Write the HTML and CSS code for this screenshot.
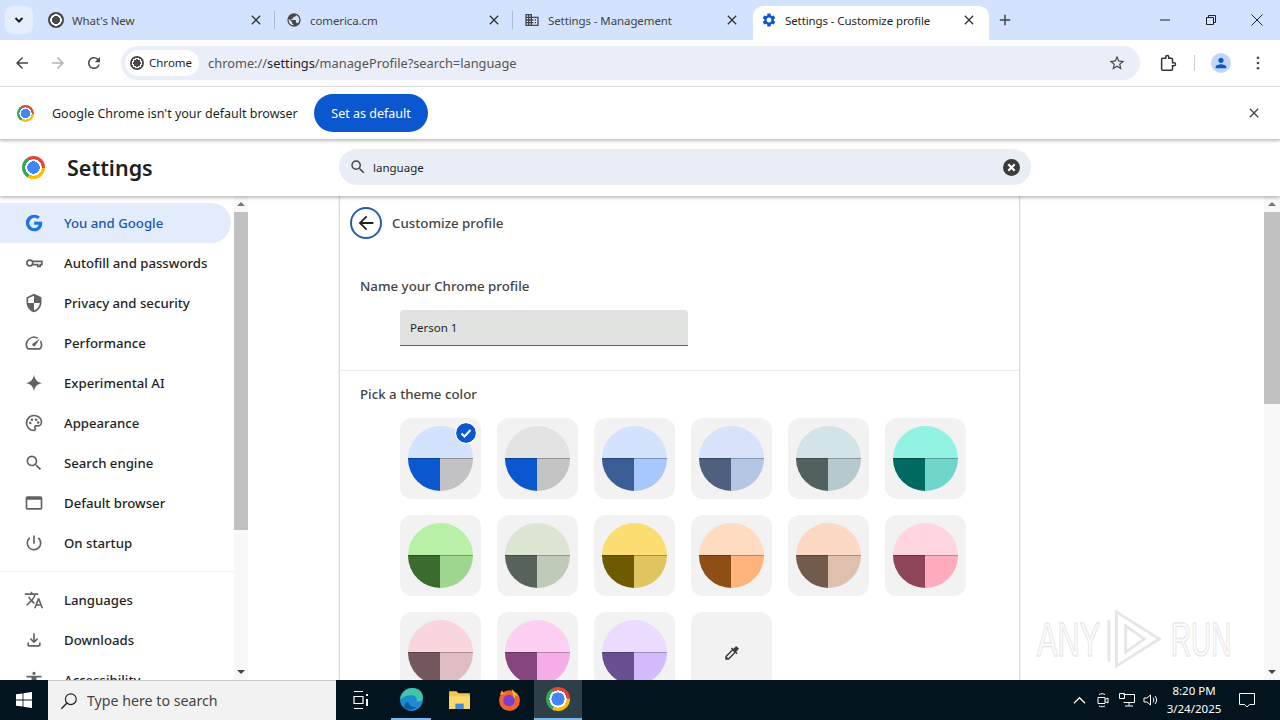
FILE: index.html
```html
<!DOCTYPE html>
<html lang="en">
<head>
  <title>Settings - Customize profile</title>
  <meta charset="utf-8" />
  <link rel="stylesheet" href="styles.css">
</head>
<body>

  <div class="tabstrip">
    <div class="tab-search"><svg class="ic12" viewBox="0 0 12 12"><path d="M2.500 4 6 7.500 9.500 4" fill="none" stroke="#1f1f1f" stroke-width="2"/></svg></div>
    <div class="tab">
      <span class="chrome-logo mono ic16"></span>
      <span class="tab-title">What's New</span>
      <svg class="ic16 tab-close" viewBox="0 0 24 24"><use href="#i-close"/></svg>
    </div>
    <div class="tab with-sep">
      <svg class="ic16 fav" viewBox="0 0 24 24"><path d="M12 2a10 10 0 1 0 0 20 10 10 0 0 0 0-20zm-1 17.930A8 8 0 0 1 4 12c0-.62.08-1.210.21-1.790L9 15v1a2 2 0 0 0 2 2v1.930zm6.900-2.540A2 2 0 0 0 16 16h-1v-3a1 1 0 0 0-1-1H8v-2h2a1 1 0 0 0 1-1V7h2a2 2 0 0 0 2-2v-.41a7.980 7.980 0 0 1 2.900 12.800z"/></svg>
      <span class="tab-title">comerica.cm</span>
      <svg class="ic16 tab-close" viewBox="0 0 24 24"><use href="#i-close"/></svg>
    </div>
    <div class="tab with-sep">
      <svg class="ic16 fav" viewBox="0 0 24 24"><path d="M12 7V3H2v18h20V7H12zM6 19H4v-2h2v2zm0-4H4v-2h2v2zm0-4H4V9h2v2zm0-4H4V5h2v2zm4 12H8v-2h2v2zm0-4H8v-2h2v2zm0-4H8V9h2v2zm0-4H8V5h2v2zm10 12h-8v-2h2v-2h-2v-2h2v-2h-2V9h8v10zm-2-8h-2v2h2v-2zm0 4h-2v2h2v-2z"/></svg>
      <span class="tab-title">Settings - Management</span>
      <svg class="ic16 tab-close" viewBox="0 0 24 24"><use href="#i-close"/></svg>
    </div>
    <div class="tab active">
      <svg class="ic16 gear" viewBox="0 0 24 24"><path d="M19.140 12.940c.04-.3.060-.61.060-.94 0-.32-.02-.64-.07-.94l2.030-1.580a.49.49 0 0 0 .12-.61l-1.920-3.320a.488.488 0 0 0-.59-.22l-2.390.96c-.5-.38-1.030-.7-1.620-.94l-.36-2.540a.484.484 0 0 0-.48-.41h-3.840c-.24 0-.43.17-.47.41l-.36 2.540c-.59.24-1.130.57-1.620.94l-2.390-.96c-.22-.08-.47 0-.59.22L2.740 8.870c-.12.21-.08.47.12.61l2.030 1.580c-.05.3-.09.63-.09.94s.02.64.07.94l-2.030 1.580a.49.49 0 0 0-.12.61l1.920 3.320c.12.22.37.29.59.22l2.390-.96c.5.38 1.030.7 1.620.94l.36 2.540c.05.24.24.41.48.41h3.840c.24 0 .44-.17.47-.41l.36-2.540c.59-.24 1.130-.56 1.620-.94l2.390.96c.22.08.47 0 .59-.22l1.920-3.320c.12-.22.07-.47-.12-.61l-2.010-1.580zM12 15.600c-1.980 0-3.600-1.620-3.600-3.600s1.620-3.600 3.600-3.600 3.600 1.620 3.600 3.600-1.620 3.600-3.600 3.600z"/></svg>
      <span class="tab-title">Settings - Customize profile</span>
      <svg class="ic16 tab-close" viewBox="0 0 24 24"><use href="#i-close"/></svg>
    </div>
    <svg class="ic12 new-tab" viewBox="0 0 16 16"><path d="M8 1v14M1 8h14" stroke="#444" stroke-width="2"/></svg>
    <div class="win-controls">
      <svg viewBox="0 0 12 12"><path d="M1 6h10" stroke="#222"/></svg>
      <svg viewBox="0 0 12 12"><path d="M1.500 3.500h7v7h-7zM3.500 3.500v-2h7v7h-2" fill="none" stroke="#222"/></svg>
      <svg viewBox="0 0 12 12"><path d="M.5.500l11 11M11.500.500l-11 11" stroke="#222"/></svg>
    </div>
  </div>

  <div class="toolbar">
    <svg class="ic18 nav" viewBox="0 0 24 24"><path d="M20 11H7.830l5.590-5.590L12 4l-8 8 8 8 1.410-1.410L7.830 13H20v-2z"/></svg>
    <svg class="ic18 nav off" viewBox="0 0 24 24"><path d="M12 4l-1.410 1.410L16.170 11H4v2h12.170l-5.580 5.590L12 20l8-8z"/></svg>
    <svg class="ic18 nav" viewBox="0 0 24 24"><path d="M17.650 6.350A7.958 7.958 0 0 0 12 4c-4.420 0-7.990 3.580-7.990 8s3.570 8 7.990 8c3.730 0 6.840-2.550 7.730-6h-2.080A5.990 5.990 0 0 1 12 18c-3.310 0-6-2.690-6-6s2.690-6 6-6c1.660 0 3.140.69 4.220 1.780L13 11h7V4l-2.350 2.350z"/></svg>
    <div class="omnibox">
      <div class="chip"><span class="chrome-logo mono ic14"></span>Chrome</div>
      <span class="url">chrome://<b>settings</b>/manageProfile?search=language</span>
      <svg class="ic18 star" viewBox="0 0 24 24"><path d="M22 9.240l-7.190-.62L12 2 9.190 8.630 2 9.240l5.460 4.730L5.820 21 12 17.270 18.180 21l-1.630-7.030L22 9.240zM12 15.400l-3.760 2.270 1-4.280-3.320-2.880 4.380-.38L12 6.100l1.710 4.040 4.380.38-3.320 2.880 1 4.280L12 15.400z"/></svg>
    </div>
    <svg class="ic18 ext" viewBox="0 0 24 24"><path d="M20 11.500h-2V7a1.500 1.500 0 0 0-1.500-1.500H13V4a2 2 0 0 0-4 0v1.500H5A1.500 1.500 0 0 0 3.500 7v13A1.500 1.500 0 0 0 5 21.500h11.500A1.500 1.500 0 0 0 18 20v-4.500h2a2 2 0 0 0 0-4z" fill="none" stroke="#333" stroke-width="2"/></svg>
    <span class="tool-sep"></span>
    <span class="avatar"><svg class="ic16" viewBox="0 0 24 24"><path d="M12 12c2.210 0 4-1.790 4-4s-1.790-4-4-4-4 1.790-4 4 1.790 4 4 4zm0 2c-2.670 0-8 1.340-8 4v2h16v-2c0-2.660-5.330-4-8-4z"/></svg></span>
    <svg class="ic18 menu" viewBox="0 0 24 24"><circle cx="12" cy="5" r="1.800"/><circle cx="12" cy="12" r="1.800"/><circle cx="12" cy="19" r="1.800"/></svg>
  </div>

  <div class="infobar">
    <span class="chrome-logo ic17"></span>
    <span class="info-text">Google Chrome isn't your default browser</span>
    <span class="default-btn">Set as default</span>
    <svg class="ic16 info-close" viewBox="0 0 24 24"><use href="#i-close"/></svg>
  </div>

  <div class="settings-head">
    <div class="brand">
      <span class="chrome-logo ic23"></span>
      <h1>Settings</h1>
    </div>
    <div class="search-box">
      <svg class="ic18" viewBox="0 0 24 24"><use href="#i-search"/></svg>
      <span class="search-text">language</span>
      <span class="search-clear"><svg viewBox="0 0 16 16"><path d="M5 5l6 6M11 5l-6 6" stroke="#fff" stroke-width="2"/></svg></span>
    </div>
  </div>

  <div class="content">
    <nav class="sidebar">
      <a class="nav-item active"><svg viewBox="0 0 24 24"><path d="M12.240 10.290v3.860h5.400c-.22 1.400-1.630 4.100-5.400 4.100a6.260 6.260 0 0 1 0-12.500c2 0 3.340.85 4.100 1.580l2.800-2.700A9.900 9.900 0 0 0 12.240 2a10 10 0 1 0 0 20c5.780 0 9.600-4.060 9.600-9.780 0-.66-.07-1.160-.16-1.660z"/></svg>You and Google</a>
      <a class="nav-item"><svg viewBox="0 0 24 24"><circle cx="7" cy="12" r="3.500" fill="none" stroke="#5f6368" stroke-width="2"/><path d="M10.500 10h11v4h-2v2h-3v-2h-6" fill="none" stroke="#5f6368" stroke-width="2"/></svg>Autofill and passwords</a>
      <a class="nav-item"><svg viewBox="0 0 24 24"><path d="M12 1 3 5v6c0 5.550 3.840 10.740 9 12 5.160-1.260 9-6.450 9-12V5l-9-4zm0 10.990h7c-.53 4.120-3.280 7.790-7 8.940V12H5V6.300l7-3.110v8.800z"/></svg>Privacy and security</a>
      <a class="nav-item"><svg viewBox="0 0 24 24"><path d="M20.380 8.570l-1.230 1.850a8 8 0 0 1-.22 7.580H5.070A8 8 0 0 1 15.580 6.850l1.850-1.230A10 10 0 0 0 3.350 19a2 2 0 0 0 1.720 1h13.850a2 2 0 0 0 1.740-1 10 10 0 0 0-.27-10.440zm-9.790 6.840a2 2 0 0 0 2.830 0l5.660-8.490-8.490 5.660a2 2 0 0 0 0 2.830z"/></svg>Performance</a>
      <a class="nav-item"><svg viewBox="0 0 24 24"><path d="M12 2C13 8 16 11 22 12 16 13 13 16 12 22 11 16 8 13 2 12 8 11 11 8 12 2z"/></svg>Experimental AI</a>
      <a class="nav-item"><svg viewBox="0 0 24 24"><path d="M12 3C7 3 3 7 3 12s4 9 9 9a1.800 1.800 0 0 0 1.300-3c-.9-1.100-.2-2.500 1.200-2.500H16c2.800 0 5-2 5-4.800C21 6.500 17 3 12 3z" fill="none" stroke="#5f6368" stroke-width="2"/><circle cx="7.500" cy="12" r="1.500"/><circle cx="9.500" cy="8" r="1.500"/><circle cx="14.500" cy="8" r="1.500"/><circle cx="17" cy="11.500" r="1.500"/></svg>Appearance</a>
      <a class="nav-item"><svg viewBox="0 0 24 24"><use href="#i-search"/></svg>Search engine</a>
      <a class="nav-item"><svg viewBox="0 0 24 24"><path d="M20 4H4a2 2 0 0 0-2 2v12a2 2 0 0 0 2 2h16a2 2 0 0 0 2-2V6a2 2 0 0 0-2-2zm0 14H4V8h16v10z"/></svg>Default browser</a>
      <a class="nav-item"><svg viewBox="0 0 24 24"><path d="M13 3h-2v10h2V3zm4.830 2.170l-1.420 1.420A6.920 6.920 0 0 1 19 12c0 3.870-3.130 7-7 7A6.995 6.995 0 0 1 7.580 6.580L6.170 5.170A8.932 8.932 0 0 0 3 12a9 9 0 0 0 18 0c0-2.740-1.230-5.180-3.170-6.830z"/></svg>On startup</a>
      <div class="nav-divider"></div>
      <a class="nav-item"><svg viewBox="0 0 24 24"><path d="M12.870 15.070l-2.540-2.510.03-.03A17.520 17.520 0 0 0 14.070 6H17V4h-7V2H8v2H1v2h11.170C11.500 7.920 10.440 9.750 9 11.350 8.070 10.320 7.300 9.190 6.690 8h-2c.73 1.630 1.730 3.170 2.980 4.560l-5.090 5.020L4 19l5-5 3.110 3.110.76-2.040zM18.500 10h-2L12 22h2l1.120-3h4.750L21 22h2l-4.500-12zm-2.620 7l1.620-4.330L19.120 17h-3.240z"/></svg>Languages</a>
      <a class="nav-item"><svg viewBox="0 0 24 24"><path d="M18 15v3H6v-3H4v3a2 2 0 0 0 2 2h12a2 2 0 0 0 2-2v-3h-2zM17 11l-1.410-1.410L13 12.170V4h-2v8.170L8.410 9.590 7 11l5 5 5-5z"/></svg>Downloads</a>
      <a class="nav-item"><svg viewBox="0 0 24 24"><path d="M12 2a2 2 0 1 1 0 4 2 2 0 0 1 0-4zm9 7h-6v13h-2v-6h-2v6H9V9H3V7h18v2z"/></svg>Accessibility</a>
    </nav>
    <div class="scrollbar side"><i class="arrow up"></i><b class="thumb"></b><i class="arrow down"></i></div>

    <main class="main">
      <section class="card">
        <div class="card-head">
          <span class="back-btn"><svg class="ic22" viewBox="0 0 24 24"><path d="M20 11H7.830l5.590-5.590L12 4l-8 8 8 8 1.410-1.410L7.830 13H20v-2z"/></svg></span>
          <h2>Customize profile</h2>
        </div>
        <div class="name-section">
          <h3>Name your Chrome profile</h3>
          <div class="name-input">Person 1</div>
        </div>
        <div class="theme-section">
          <h3>Pick a theme color</h3>
          <div class="swatches">
            <div class="swatch"><span class="disc c-blue"></span><span class="check"><svg viewBox="0 0 16 16"><path d="M3.500 8.500 6.500 11.500 12.500 5" fill="none" stroke="#fff" stroke-width="2"/></svg></span></div>
            <div class="swatch"><span class="disc c-grey"></span></div>
            <div class="swatch"><span class="disc c-navy"></span></div>
            <div class="swatch"><span class="disc c-slate"></span></div>
            <div class="swatch"><span class="disc c-steel"></span></div>
            <div class="swatch"><span class="disc c-teal"></span></div>
            <div class="swatch"><span class="disc c-green"></span></div>
            <div class="swatch"><span class="disc c-sage"></span></div>
            <div class="swatch"><span class="disc c-yellow"></span></div>
            <div class="swatch"><span class="disc c-orange"></span></div>
            <div class="swatch"><span class="disc c-tan"></span></div>
            <div class="swatch"><span class="disc c-rose"></span></div>
            <div class="swatch"><span class="disc c-mauve"></span></div>
            <div class="swatch"><span class="disc c-pink"></span></div>
            <div class="swatch"><span class="disc c-violet"></span></div>
            <div class="swatch picker"><svg class="ic18" viewBox="0 0 24 24"><path d="M20.710 5.630l-2.340-2.340a1 1 0 0 0-1.410 0l-3.120 3.120-1.930-1.910-1.410 1.410 1.420 1.420L3 16.250V21h4.750l8.920-8.920 1.420 1.420 1.410-1.410-1.920-1.920 3.120-3.120a1 1 0 0 0 .01-1.420zM6.920 19 5 17.080l8.060-8.060 1.920 1.920L6.920 19z"/></svg></div>
          </div>
        </div>
      </section>
    </main>
    <div class="scrollbar page"><i class="arrow up"></i><b class="thumb"></b><i class="arrow down"></i></div>

    <div class="watermark">
      <span>ANY</span>
      <svg viewBox="0 0 60 64"><path d="M10 3 56 32 10 61zM2 12v44M20 18 40 32 20 46z" fill="none" stroke="#e6e6e6" stroke-width="3"/></svg>
      <span class="wm-run">RUN</span>
    </div>
  </div>

  <footer class="taskbar">
    <div class="start"><svg viewBox="0 0 16 16"><path fill="#fff" d="M0 2.300 6.600 1.400v6.200H0zM7.400 1.300 16 0v7.600H7.400zM0 8.400h6.600v6.200L0 13.700zM7.400 8.400H16V16l-8.600-1.300z"/></svg></div>
    <div class="task-search">
      <svg viewBox="0 0 20 20"><circle cx="12" cy="8" r="6" fill="none" stroke="#222" stroke-width="1.300"/><path d="M7.500 12.500 1.500 18.500" stroke="#222" stroke-width="1.500"/></svg>
      <span>Type here to search</span>
    </div>
    <div class="task-view"><svg viewBox="0 0 18 18"><path d="M3 .5h9M3 17.500h9M3 5.500h9v7H3z" fill="none" stroke="#fff" stroke-width="1.200"/><path d="M15 3h2v2h-2zM15 8h2v7h-2z" fill="#fff"/></svg></div>
    <div class="task-app edge running">
      <svg viewBox="0 0 24 24"><circle cx="12" cy="12" r="11" fill="#1b8ccf"/><path d="M1 12C2 5 8 1 13 1c6 0 10 4 10 9 0 3-3 4-6 4 1-4-2-6-5-6-5 0-8 2-11 4z" fill="#3fc6a8"/><path d="M9 14c0 4 4 6 8 5-3 3-8 4-12 1 0-3 1-5 4-6z" fill="#0c59a4"/></svg>
    </div>
    <div class="task-app">
      <svg viewBox="0 0 24 24"><path d="M2 4h7l2 2h11v15H2z" fill="#f3c64d"/><path d="M2 9h20v12H2z" fill="#fbd971"/><path d="M8 16h8v5H8z" fill="#3d8ed6"/></svg>
    </div>
    <div class="task-app">
      <svg viewBox="0 0 24 24"><circle cx="12" cy="13" r="10" fill="#f0642f"/><path d="M14 1c1 3 5 5 8 10-1-2-3-3-5-3 1 2 0 3-1 3z" fill="#ffbd2e"/><circle cx="11.500" cy="13" r="5.500" fill="#7b3fd0"/><path d="M3 8c0-2 1-4 2-5 0 2 2 3 4 3z" fill="#ff9a2e"/></svg>
    </div>
    <div class="task-app running current"><span class="chrome-logo ic24"></span></div>

    <div class="tray">
      <svg class="tray-caret" viewBox="0 0 14 14"><path d="M1 10l6-6 6 6" fill="none" stroke="#fff" stroke-width="1.300"/></svg>
      <svg class="tray-ic" viewBox="0 0 16 16"><path d="M3 5.500h7v6H3zM10 7.500l3-1.500v5l-3-1.500M4 2.500c2-1 4-1 6 0M4 14c2 1 4 1 6 0" fill="none" stroke="#fff"/></svg>
      <svg class="tray-ic" viewBox="0 0 16 16"><path d="M4.500 2.500h11v8h-11M.5 1.500h5v5h-5zM10 10.500v3M6 14h8" fill="none" stroke="#fff"/></svg>
      <svg class="tray-ic" viewBox="0 0 16 16"><path d="M1 6h3l3.500-3v10L4 10H1zM10 5.500c1 1.500 1 3.500 0 5M12 4c2 2.500 2 5.500 0 8" fill="none" stroke="#fff"/></svg>
      <div class="clock">8:20 PM<br>3/24/2025</div>
      <svg class="tray-note" viewBox="0 0 18 18"><path d="M1.500 2.500h15v11h-5L9 16l-2.500-2.500h-5z" fill="none" stroke="#fff"/></svg>
    </div>
  </footer>

  <svg class="defs" aria-hidden="true">
    <symbol id="i-close" viewBox="0 0 24 24"><path d="M19 6.410 17.590 5 12 10.590 6.410 5 5 6.410 10.590 12 5 17.590 6.410 19 12 13.410 17.590 19 19 17.590 13.410 12z"/></symbol>
    <symbol id="i-search" viewBox="0 0 24 24"><path d="M15.500 14h-.79l-.28-.27A6.471 6.471 0 0 0 16 9.500 6.500 6.500 0 1 0 9.500 16c1.610 0 3.090-.59 4.230-1.570l.27.28v.79l5 4.990L20.490 19l-4.990-5zm-6 0C7.010 14 5 11.990 5 9.500S7.010 5 9.500 5 14 7.010 14 9.500 11.990 14 9.500 14z"/></symbol>
  </svg>

</body>
</html>
```

FILE: styles.css
```css
* {
  box-sizing: border-box;
}

html, body {
  height: 100%;
}

body {
  margin: 0;
  width: 1280px;
  height: 720px;
  overflow: hidden;
  display: flex;
  flex-direction: column;
  font-family: "Noto Sans", "Liberation Sans", sans-serif;
  color: #1f1f1f;
  background: #fff;
}

h1, h2, h3 {
  margin: 0;
}

svg {
  display: block;
  flex: none;
  fill: #474747;
}

.defs {
  display: none;
}

.ic12 { width: 12px; height: 12px; }
.ic14 { width: 14px; height: 14px; }
.ic16 { width: 16px; height: 16px; }
.ic17 { width: 17px; height: 17px; }
.ic18 { width: 18px; height: 18px; }
.ic22 { width: 22px; height: 22px; }
.ic23 { width: 23px; height: 23px; }
.ic24 { width: 24px; height: 24px; }

.chrome-logo {
  display: block;
  flex: none;
  border-radius: 50%;
  background:
    radial-gradient(circle, #4285f4 0 38%, #fff 39% 50%, transparent 51%),
    conic-gradient(from 330deg, #ea4335 0 120deg, #fbbc04 0 240deg, #34a853 0);
}

.chrome-logo.mono {
  background:
    radial-gradient(circle, #4a4a4a 0 36%, #fff 37% 50%, transparent 51%),
    conic-gradient(#4a4a4a 0 100%);
}

/* tab strip */

.tabstrip {
  flex: none;
  height: 40px;
  display: flex;
  align-items: center;
  background: #d3e3fd;
}

.tab-search {
  width: 28px;
  height: 28px;
  margin: 0 3px 0 5px;
  display: flex;
  align-items: center;
  justify-content: center;
  border-radius: 8px;
  background: #e4eefd;
}

.tab {
  width: 238px;
  height: 34px;
  margin-top: 6px;
  padding: 0 10px 6px 12px;
  display: flex;
  align-items: center;
  position: relative;
  font-size: 11.500px;
  letter-spacing: -.1px;
  color: #444;
}

.tab .chrome-logo, .tab .fav, .tab .gear {
  margin-right: 8px;
}

.tab-title {
  flex: 1;
  white-space: nowrap;
  overflow: hidden;
}

.tab-close {
  fill: #333;
}

.with-sep::before {
  content: "";
  position: absolute;
  left: 0;
  top: 5px;
  height: 18px;
  width: 1px;
  background: #a8bcd8;
}

.tab.active {
  width: 236px;
  padding-left: 8px;
  padding-right: 12px;
  margin-left: 3px;
  background: #fff;
  border-radius: 10px 10px 0 0;
  color: #1f1f1f;
}

.gear {
  fill: #0b57d0;
}

.new-tab {
  margin-left: 10px;
}

.win-controls {
  margin-left: auto;
  display: flex;
  align-items: center;
  gap: 34px;
  padding-right: 17px;
}

.win-controls svg {
  width: 12px;
  height: 12px;
}

/* toolbar */

.toolbar {
  flex: none;
  height: 47px;
  display: flex;
  align-items: center;
  padding: 0 13px 1px 13px;
  background: #fff;
  border-bottom: 1px solid #e3e3e3;
  border-radius: 8px 8px 0 0;
}

.nav {
  margin-right: 18px;
}

.nav.off {
  fill: #b0b3b8;
}

.omnibox {
  width: 1020px;
  height: 34px;
  padding: 0 14px 0 4px;
  display: flex;
  align-items: center;
  border-radius: 17px;
  background: #e9eef8;
}

.chip {
  height: 26px;
  padding: 0 7px 0 5px;
  display: flex;
  align-items: center;
  gap: 5px;
  border-radius: 13px;
  background: #fff;
  font-size: 11.500px;
}

.url {
  flex: 1;
  margin-left: 9px;
  font-size: 12.800px;
  color: #555;
}

.url b {
  font-weight: 400;
  color: #1f1f1f;
}

.ext {
  margin-left: 19px;
}

.tool-sep {
  width: 1px;
  height: 16px;
  margin: 0 16px 0 17px;
  background: #ccc;
}

.avatar {
  width: 20px;
  height: 20px;
  display: flex;
  align-items: center;
  justify-content: center;
  border-radius: 50%;
  background: #c2d7f8;
}

.avatar svg {
  fill: #0b57d0;
}

.menu {
  margin-left: 18px;
}

/* default browser bar */

.infobar {
  flex: none;
  height: 53px;
  padding: 0 18px 0 17px;
  display: flex;
  align-items: center;
  border-bottom: 1px solid #ccc;
  box-shadow: 0 1px 3px rgba(0, 0, 0, .25);
  position: relative;
  font-size: 12.500px;
}

.info-text {
  margin-left: 18px;
  width: 262px;
  white-space: nowrap;
}

.default-btn {
  width: 114px;
  height: 38px;
  display: flex;
  align-items: center;
  justify-content: center;
  border-radius: 19px;
  background: #0b57d0;
  color: #fff;
}

.info-close {
  margin-left: auto;
}

/* settings header */

.settings-head {
  flex: none;
  height: 56px;
  padding-bottom: 2px;
  display: flex;
  align-items: center;
  box-shadow: 0 2px 3px rgba(0, 0, 0, .25);
  position: relative;
  z-index: 1;
}

.brand {
  width: 339px;
  padding-left: 22px;
  display: flex;
  align-items: center;
  gap: 22px;
}

.brand h1 {
  font-size: 21.500px;
  font-weight: 600;
  color: #1f1f1f;
}

.search-box {
  width: 692px;
  height: 36px;
  padding: 0 11px 0 10px;
  display: flex;
  align-items: center;
  gap: 6px;
  border-radius: 18px;
  background: #e9eef6;
}

.search-text {
  flex: 1;
  font-size: 11.500px;
}

.search-clear {
  width: 17px;
  height: 17px;
  border-radius: 50%;
  background: #3c3c3c;
}

/* content area */

.content {
  flex: 1;
  min-height: 0;
  display: flex;
  overflow: hidden;
  position: relative;
}

.sidebar {
  width: 234px;
  flex: none;
  padding-top: 7px;
  overflow: hidden;
}

.nav-item {
  height: 40px;
  width: 231px;
  padding-left: 24px;
  display: flex;
  align-items: center;
  gap: 20px;
  font-size: 13.200px;
  font-weight: 500;
  color: #1f1f1f;
}

.nav-item svg {
  width: 20px;
  height: 20px;
  fill: #5f6368;
}

.nav-item.active {
  background: #e3ecfb;
  border-radius: 0 20px 20px 0;
  color: #1a56b8;
}

.nav-item.active svg {
  fill: #1a73e8;
}

.nav-divider {
  height: 1px;
  margin: 8px 0;
  background: #eeeeee;
}

.scrollbar {
  flex: none;
  display: flex;
  flex-direction: column;
  background: #f8f8f8;
}

.scrollbar.side {
  width: 14px;
}

.scrollbar.page {
  width: 16px;
}

.arrow {
  height: 16px;
  flex: none;
  position: relative;
}

.arrow::after {
  content: "";
  position: absolute;
  left: 50%;
  margin-left: -4px;
  top: 6px;
  border: 4px solid transparent;
  border-top: 0;
  border-bottom: 4px solid #777;
}

.arrow.down {
  margin-top: auto;
}

.arrow.down::after {
  border-bottom: 0;
  border-top: 4px solid #444;
}

.thumb {
  display: block;
  background: #c0c0c0;
}

.side .thumb {
  height: 318px;
}

.page .thumb {
  height: 192px;
}

.main {
  flex: 1;
  min-width: 0;
  overflow: hidden;
  padding-left: 91px;
}

.card {
  width: 681px;
  min-height: 100%;
  border-left: 1px solid #dcdcdc;
  border-right: 1px solid #dcdcdc;
  box-shadow: 0 0 2px rgba(0, 0, 0, .12);
}

.card-head {
  height: 54px;
  padding-left: 10px;
  display: flex;
  align-items: center;
  gap: 10px;
}

.back-btn {
  width: 32px;
  height: 32px;
  display: flex;
  align-items: center;
  justify-content: center;
  border: 2px solid #2a5caa;
  border-radius: 50%;
}

.back-btn svg {
  fill: #222;
}

.card-head h2 {
  font-size: 13.300px;
  font-weight: 500;
  color: #444;
  margin-top: -1px;
}

h3 {
  font-size: 13.300px;
  font-weight: 500;
  color: #444;
}

.name-section {
  height: 121px;
  padding: 27px 0 0 20px;
  border-bottom: 1px solid #ededed;
}

.name-input {
  width: 288px;
  height: 36px;
  margin: 15px 0 0 40px;
  padding: 0 10px;
  display: flex;
  align-items: center;
  background: #e1e3e1;
  border-bottom: 1px solid #5f5f5f;
  border-radius: 4px 4px 0 0;
  font-size: 11.500px;
}

.theme-section {
  padding: 14px 0 0 20px;
}

.swatches {
  margin: 15px 0 0 40px;
  display: grid;
  grid-template-columns: repeat(6, 81px);
  gap: 16px;
}

.swatch {
  height: 81px;
  padding: 8px;
  position: relative;
  border-radius: 12px;
  background: #f2f2f2;
}

.disc {
  display: block;
  width: 65px;
  height: 65px;
  border-radius: 50%;
  background:
    linear-gradient(var(--top) 50%, rgba(0, 0, 0, .25) 50% calc(50% + 1px), transparent calc(50% + 1px)),
    linear-gradient(90deg, var(--left) 50%, var(--right) 50%);
}

.check {
  position: absolute;
  top: 5px;
  right: 5px;
  width: 20px;
  height: 20px;
  padding: 2px;
  border-radius: 50%;
  background: #0b57d0;
  outline: 1px solid #fff;
}

.picker {
  display: flex;
  align-items: center;
  justify-content: center;
}

.picker svg {
  fill: #3c3c3c;
}

.c-blue { --top: #d3e3fd; --left: #0b57d0; --right: #c2c2c4; }
.c-grey { --top: #e3e3e3; --left: #0b57d0; --right: #c4c4c4; }
.c-navy { --top: #d3e3fd; --left: #3a5d96; --right: #a8c7fa; }
.c-slate { --top: #d6e3fb; --left: #4f5f7f; --right: #b5c6e4; }
.c-steel { --top: #d3e4e8; --left: #50615f; --right: #b5c9ce; }
.c-teal { --top: #93f3e3; --left: #006a60; --right: #70d6c9; }
.c-green { --top: #b7f0a6; --left: #3c6b2f; --right: #9fd68f; }
.c-sage { --top: #dbe5d2; --left: #57635a; --right: #bfcbb8; }
.c-yellow { --top: #fbdd72; --left: #6e5a00; --right: #dfc45f; }
.c-orange { --top: #ffdbc1; --left: #8e4f17; --right: #ffb47e; }
.c-tan { --top: #fbd9c5; --left: #725b4d; --right: #dfbfae; }
.c-rose { --top: #ffd6e0; --left: #8e4558; --right: #ffaabd; }
.c-mauve { --top: #f9d6dd; --left: #75585d; --right: #dfbcc2; }
.c-pink { --top: #fdd0f3; --left: #85467e; --right: #f4aee5; }
.c-violet { --top: #ebdcff; --left: #684f92; --right: #d3bbfb; }

.watermark {
  position: absolute;
  left: 1037px;
  top: 412px;
  display: flex;
  align-items: center;
  gap: 2px;
  font-family: "Liberation Sans", sans-serif;
  font-size: 48px;
  color: transparent;
  -webkit-text-stroke: 1.500px #e8e8e8;
  pointer-events: none;
}

.watermark span {
  display: block;
  width: 68px;
  transform: scaleX(.64);
  transform-origin: left center;
}

.watermark .wm-run {
  margin-left: 6px;
  transform: scaleX(.58);
}

.watermark svg {
  width: 56px;
  height: 62px;
  fill: none;
}

/* windows taskbar */

.taskbar {
  flex: none;
  height: 40px;
  display: flex;
  align-items: stretch;
  background: #04141f;
  position: relative;
  z-index: 2;
}

.start {
  width: 48px;
  display: flex;
  align-items: center;
  justify-content: center;
}

.start svg {
  width: 16px;
  height: 16px;
}

.task-search {
  width: 288px;
  padding-left: 12px;
  display: flex;
  align-items: center;
  gap: 9px;
  background: #f2f2f2;
  border-top: 1px solid #c8c8c8;
  font-size: 14.200px;
  color: #444;
}

.task-search svg {
  width: 18px;
  height: 18px;
  fill: none;
}

.task-view {
  width: 48px;
  display: flex;
  align-items: center;
  justify-content: center;
}

.task-view svg {
  width: 18px;
  height: 18px;
  fill: none;
}

.task-app {
  width: 50px;
  display: flex;
  align-items: center;
  justify-content: center;
  border-bottom: 2px solid transparent;
}

.task-app svg {
  width: 25px;
  height: 25px;
}

.task-app.edge {
  width: 40px;
  margin: 0 3px 0 7px;
}

.task-app.running {
  border-bottom-color: #76b9ed;
}

.task-app.current {
  width: 48px;
  background: #2f3f4a;
}

.tray {
  margin-left: auto;
  display: flex;
  align-items: center;
  color: #fff;
}

.tray-caret {
  width: 13px;
  height: 13px;
  margin-right: 9px;
  fill: none;
}

.tray-ic {
  width: 16px;
  height: 16px;
  margin-right: 8px;
  fill: none;
}

.clock {
  width: 60px;
  margin-left: -3px;
  text-align: center;
  font-size: 11.500px;
  line-height: 18px;
}

.tray-note {
  width: 18px;
  height: 18px;
  margin: 0 24px 0 14px;
  fill: none;
}
```
